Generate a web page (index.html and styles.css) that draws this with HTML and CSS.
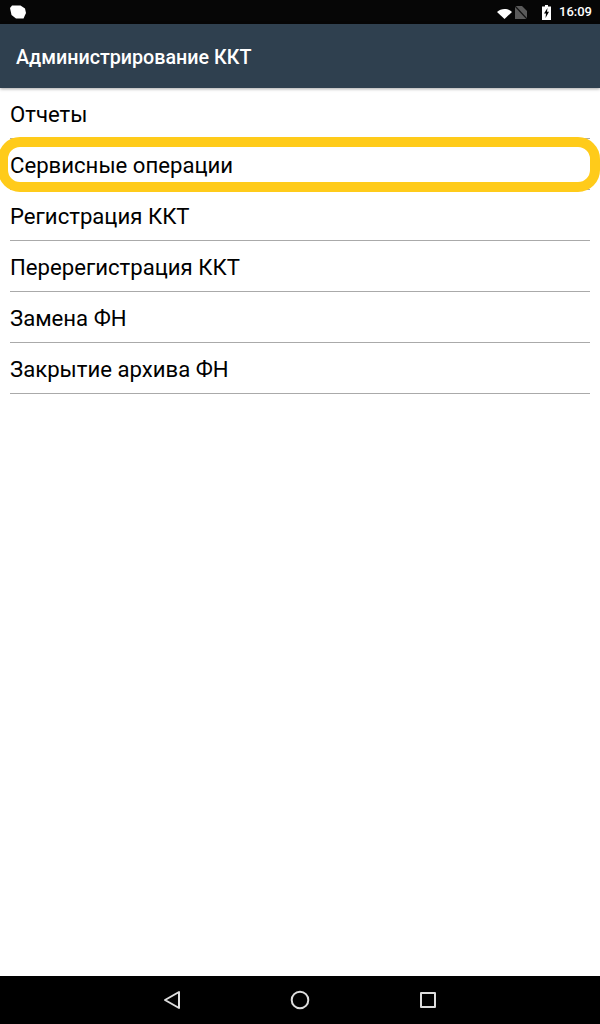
FILE: index.html
```html
<!DOCTYPE html>
<html lang="ru">
<head>
<meta charset="utf-8">
<title>Администрирование ККТ</title>
<link rel="stylesheet" href="styles.css">
</head>
<body>
<div class="screen">
  <div class="status">
    <svg class="notif" width="16" height="14" viewBox="0 0 16 14"><path d="M2 0.500h8.500L15 3.500 16 8l-2.500 5.500H6L1.500 10 0 3z" fill="#fff"/></svg>
    <div class="status-right">
      <svg class="wifi" width="15" height="10" viewBox="0 0 15 10"><path d="M0 3C4-1 11-1 15 3L7.500 10z" fill="#fff"/></svg>
      <svg class="nosim" width="12" height="13" viewBox="0 0 12 13"><path d="M0 0h7l5 5v8H0z" fill="#5a5a5a"/><path d="M0 0l12 13" stroke="#111" stroke-width="1.200"/></svg>
      <svg class="batt" width="9" height="15" viewBox="0 0 9 15"><path d="M3 0h3v1.500h3V15H0V1.500h3z" fill="#fff"/><path d="M5.500 3L2 8.500h2L3.500 13 7 6.800H5z" fill="#000"/></svg>
      <span class="clock">16:09</span>
    </div>
  </div>
  <header class="appbar">Администрирование ККТ</header>
  <main class="list">
    <div class="row">Отчеты</div>
    <div class="row">Сервисные операции</div>
    <div class="row">Регистрация ККТ</div>
    <div class="row">Перерегистрация ККТ</div>
    <div class="row">Замена ФН</div>
    <div class="row">Закрытие архива ФН</div>
    <div class="highlight"></div>
  </main>
  <nav class="navbar">
    <svg width="18" height="20" viewBox="0 0 18 20"><path d="M16 2v16L2 10z" fill="none" stroke="#ddd" stroke-width="2" stroke-linejoin="round"/></svg>
    <svg width="20" height="20" viewBox="0 0 20 20"><circle cx="10" cy="10" r="8.300" fill="none" stroke="#ddd" stroke-width="2"/></svg>
    <svg width="18" height="18" viewBox="0 0 18 18"><rect x="2" y="2" width="14" height="14" fill="none" stroke="#ddd" stroke-width="2" stroke-linejoin="round"/></svg>
  </nav>
</div>
</body>
</html>
```
FILE: styles.css
```css
* { box-sizing: border-box; }
html, body { margin: 0; padding: 0; }
body { font-family: Roboto, "Noto Sans", sans-serif; background: #fff; }
.screen { width: 600px; height: 1024px; display: flex; flex-direction: column; overflow: hidden; }
.status { height: 24px; background: #060606; display: flex; align-items: center; justify-content: space-between; padding: 0 8px 0 10px; flex: none; }
.status-right { display: flex; align-items: center; }
.wifi { margin-right: 3px; margin-top: 3px; }
.nosim { margin-right: 15px; }
.batt { margin-right: 8px; }
.clock { color: #fff; font-size: 13px; font-weight: 500; line-height: 24px; }
.appbar { height: 64px; flex: none; background: #2f404f; color: #fff; font-size: 19.700px; font-weight: 500; line-height: 68px; padding-left: 16px; box-shadow: 0 1px 3px rgba(0,0,0,.35); position: relative; z-index: 1; }
.list { flex: 1; position: relative; padding: 0 10px; }
.row { height: 51px; border-bottom: 1px solid #aaa; font-size: 22.150px; line-height: 52px; color: #000; }
.highlight { position: absolute; left: -2px; top: 49px; width: 602px; height: 55px; border: 10px solid #ffcb1a; border-radius: 22px; }
.navbar { height: 48px; flex: none; background: #000; display: flex; align-items: center; padding-left: 163px; gap: 109px; }
```
